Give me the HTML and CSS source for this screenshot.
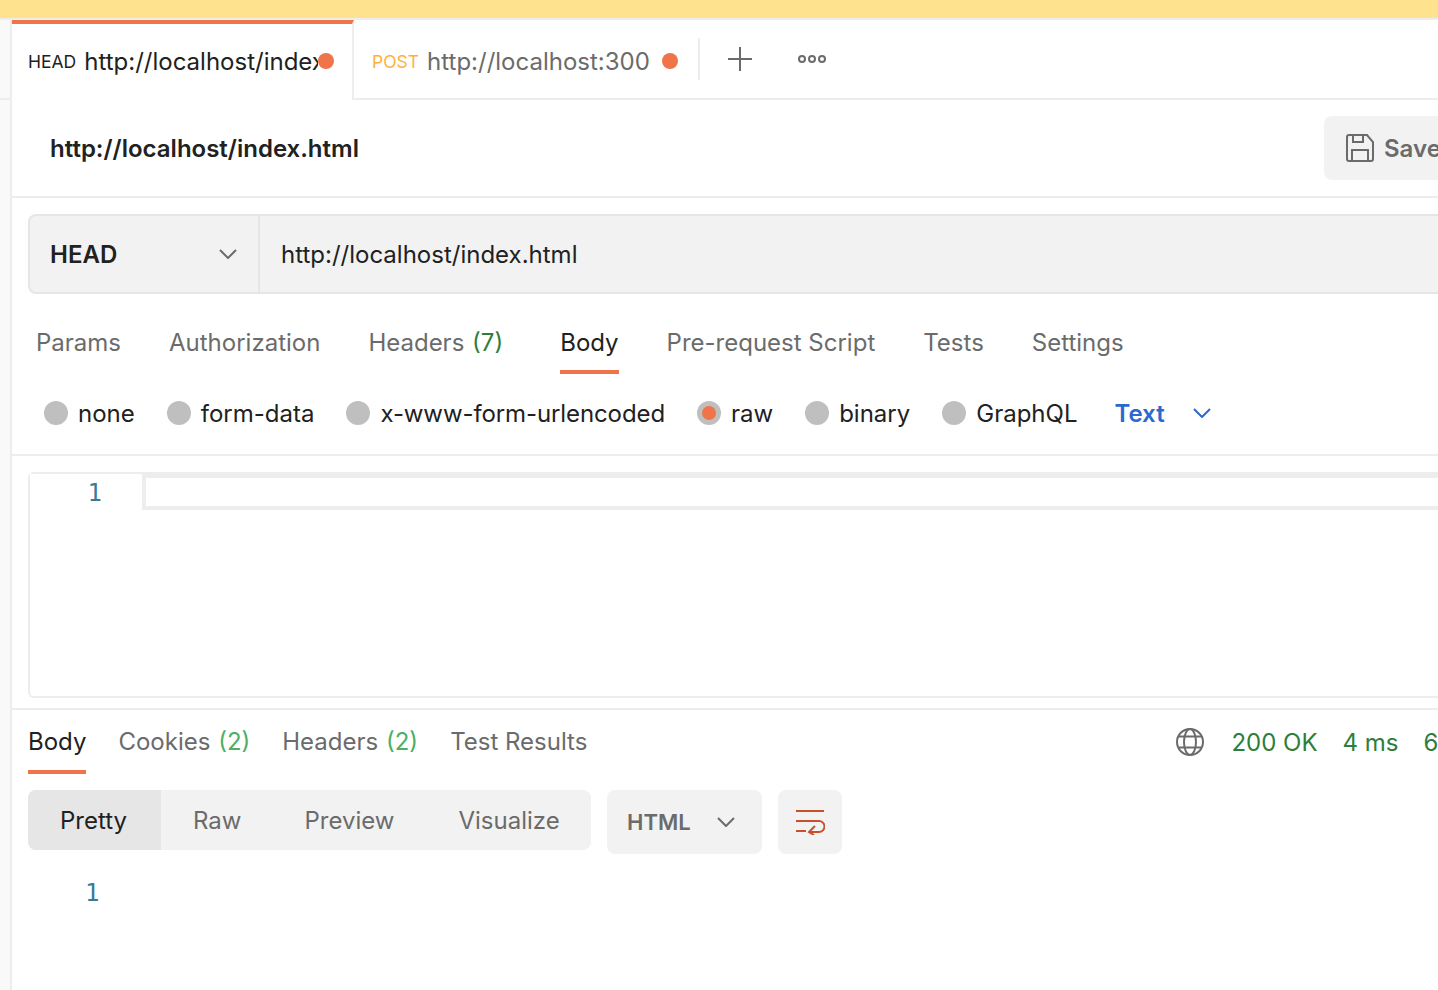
FILE: index.html
```html
<!DOCTYPE html>
<html lang="en">
<head>
  <meta charset="UTF-8">
  <title>Postman</title>
  <link rel="stylesheet" href="styles.css">
</head>
<body>
  <div class="banner"></div>
  <div class="app">
    <div class="sidebar"><div class="sidebar-head"></div></div>
    <div class="main">

      <div class="tabbar">
        <div class="tab tab-active">
          <span class="tab-method">HEAD</span>
          <span class="tab-url">http://localhost/index</span>
          <span class="dot"></span>
        </div>
        <div class="tab tab-second">
          <span class="tab-method post">POST</span>
          <span class="tab-url clipped">http://localhost:3000/</span>
          <span class="dot"></span>
        </div>
        <div class="tab-sep"></div>
        <svg class="icon-plus" width="26" height="26" viewBox="0 0 26 26"><path d="M13 1v24M1 13h24" stroke="#6b6b6b" stroke-width="2" fill="none"/></svg>
        <svg class="icon-more" width="30" height="10" viewBox="0 0 30 10"><g stroke="#6b6b6b" stroke-width="2" fill="none"><circle cx="5" cy="5" r="3"/><circle cx="15" cy="5" r="3"/><circle cx="25" cy="5" r="3"/></g></svg>
      </div>

      <div class="titlebar">
        <h1 class="title">http://localhost/index.html</h1>
        <div class="save-btn">
          <svg width="28" height="28" viewBox="0 0 28 28" fill="none" stroke="#6b6b6b" stroke-width="2"><path d="M1 3a2 2 0 0 1 2-2h18l6 7v17a2 2 0 0 1-2 2H3a2 2 0 0 1-2-2z"/><path d="M7 1v7h10V1M6 27V16h16v11"/></svg>
          <span>Save</span>
        </div>
      </div>

      <div class="urlbar">
        <div class="method">
          <span>HEAD</span>
          <svg width="18" height="10" viewBox="0 0 18 10"><path d="M1 1l8 8 8-8" stroke="#6b6b6b" stroke-width="2" fill="none"/></svg>
        </div>
        <div class="url">http://localhost/index.html</div>
      </div>

      <div class="req-tabs">
        <span class="rtab">Params</span>
        <span class="rtab">Authorization</span>
        <span class="rtab">Headers <em class="count-dark">(7)</em></span>
        <span class="rtab rtab-on req-body">Body</span>
        <span class="rtab">Pre-request Script</span>
        <span class="rtab">Tests</span>
        <span class="rtab">Settings</span>
      </div>

      <div class="body-types">
        <label class="radio"><i></i>none</label>
        <label class="radio"><i></i>form-data</label>
        <label class="radio radio-long"><i></i>x-www-form-urlencoded</label>
        <label class="radio radio-on"><i></i>raw</label>
        <label class="radio"><i></i>binary</label>
        <label class="radio"><i></i>GraphQL</label>
        <span class="type-text">Text</span>
        <svg width="18" height="10" viewBox="0 0 18 10"><path d="M1 1l8 8 8-8" stroke="#2a69ce" stroke-width="2" fill="none"/></svg>
      </div>

      <div class="editor-wrap">
        <div class="editor">
          <div class="gutter">1</div>
          <div class="code-line"></div>
        </div>
      </div>

      <div class="res-head">
        <span class="rtab rtab-on">Body</span>
        <span class="rtab">Cookies <em class="count">(2)</em></span>
        <span class="rtab">Headers <em class="count">(2)</em></span>
        <span class="rtab">Test Results</span>
        <div class="res-meta">
          <svg width="28" height="28" viewBox="0 0 28 28" fill="none" stroke="#6b6b6b" stroke-width="2"><circle cx="14" cy="14" r="13"/><ellipse cx="14" cy="14" rx="6" ry="13"/><path d="M3 8.5h22M3 19.5h22"/></svg>
          <span class="stat stat-first">200 OK</span>
          <span class="stat">4 ms</span>
          <span class="stat">66 B</span>
        </div>
      </div>

      <div class="res-tools">
        <div class="segments">
          <span class="seg seg-on">Pretty</span>
          <span class="seg seg-raw">Raw</span>
          <span class="seg seg-preview">Preview</span>
          <span class="seg seg-vis">Visualize</span>
        </div>
        <div class="lang">
          <span>HTML</span>
          <svg width="18" height="10" viewBox="0 0 18 10"><path d="M1 1l8 8 8-8" stroke="#6b6b6b" stroke-width="2" fill="none"/></svg>
        </div>
        <div class="wrap-btn">
          <svg width="30" height="26" viewBox="0 0 30 26" fill="none" stroke="#c8502b" stroke-width="2"><path d="M1 2h28M1 12h23a4.500 4.500 0 0 1 0 11h-9M1 22h10"/><path d="M20 17l-6 6 5 3"/></svg>
        </div>
      </div>

      <div class="res-code">1</div>
    </div>
  </div>
</body>
</html>
```

FILE: styles.css
```css
* {
  box-sizing: border-box;
}

html, body {
  margin: 0;
  height: 990px;
  overflow: hidden;
}

body {
  font-family: 'Inter', sans-serif;
  font-size: 24px;
  color: #212121;
  background-color: #fff;
}

.banner {
  height: 20px;
  background-color: #ffe28d;
  border-bottom: 2px solid #ededed;
}

.app {
  display: flex;
  height: 970px;
}

.sidebar {
  width: 12px;
  flex-shrink: 0;
  background-color: #f9f9f9;
  border-right: 2px solid #ededed;
}

.sidebar-head {
  height: 80px;
  border-bottom: 2px solid #ededed;
}

.main {
  width: 1600px;
  flex-shrink: 0;
}

/* tabs */
.tabbar {
  display: flex;
  align-items: center;
  height: 80px;
  border-bottom: 2px solid #ededed;
}

.tab {
  display: flex;
  align-items: center;
  font-size: 24px;
  color: #6b6b6b;
}

.tab-active {
  align-self: flex-start;
  width: 342px;
  height: 80px;
  padding: 0 18px 2px 16px;
  color: #212121;
  background-color: #fff;
  border-top: 4px solid #f0744a;
  border-right: 2px solid #ededed;
}

.tab-second {
  width: 344px;
  height: 78px;
  padding: 4px 20px 0 18px;
}

.tab-method {
  font-size: 17.5px;
  margin-right: 8px;
}

.post {
  color: #ffb13c;
}

.tab-url {
  white-space: nowrap;
  overflow: hidden;
}

.clipped {
  width: 224px;
}

.dot {
  width: 16px;
  height: 16px;
  margin-left: auto;
  border-radius: 50%;
  background-color: #f0744a;
  flex-shrink: 0;
}

.tab-sep {
  width: 2px;
  height: 42px;
  background-color: #ededed;
}

.icon-plus {
  margin-left: 27px;
}

.icon-more {
  margin-left: 44px;
}

/* title */
.titlebar {
  display: flex;
  align-items: center;
  height: 98px;
  padding-left: 38px;
  border-bottom: 2px solid #ededed;
}

.title {
  margin: 0;
  font-size: 24px;
  font-weight: 600;
  width: 1274px;
}

.save-btn {
  display: flex;
  align-items: center;
  width: 200px;
  height: 64px;
  padding-left: 22px;
  background-color: #f2f2f2;
  border-radius: 8px;
  color: #6b6b6b;
  font-weight: 600;
}

.save-btn span {
  margin-left: 10px;
}

/* url */
.urlbar {
  display: flex;
  height: 80px;
  margin: 16px 0 0 16px;
  background-color: #f2f2f2;
  border: 2px solid #e6e6e6;
  border-radius: 8px;
}

.method {
  display: flex;
  align-items: center;
  justify-content: space-between;
  width: 230px;
  padding: 0 21px 0 20px;
  border-right: 2px solid #e6e6e6;
  font-weight: 600;
}

.url {
  display: flex;
  align-items: center;
  padding-left: 21px;
}

.req-tabs {
  display: flex;
  gap: 48px;
  height: 80px;
  padding-left: 24px;
}

.req-body {
  margin-left: 9px;
}

.rtab {
  display: block;
  height: 100%;
  padding-top: 34px;
  color: #6b6b6b;
  white-space: nowrap;
}

.rtab em {
  font-style: normal;
  margin-left: 1px;
}

.count-dark {
  color: #2e7d3a;
}

.count {
  color: #4caf62;
}

.rtab-on {
  color: #212121;
  border-bottom: 4px solid #f0744a;
}

/* body type radios */
.body-types {
  display: flex;
  align-items: center;
  height: 82px;
  padding: 0 0 2px 32px;
  border-bottom: 2px solid #ededed;
}

.radio {
  display: flex;
  align-items: center;
  margin-right: 32px;
}

.radio-long {
  letter-spacing: -0.1px;
}

.radio i {
  display: flex;
  align-items: center;
  justify-content: center;
  width: 24px;
  height: 24px;
  margin-right: 10px;
  border-radius: 50%;
  background-color: #bfbfbf;
}

.radio-on i::after {
  content: "";
  width: 14px;
  height: 14px;
  border-radius: 50%;
  background-color: #f0744a;
}

.type-text {
  margin: 0 28px 0 5px;
  color: #2a69ce;
  font-weight: 600;
}

/* editor */
.editor-wrap {
  height: 254px;
  padding: 16px 0 10px 16px;
  border-bottom: 2px solid #ededed;
}

.editor {
  display: flex;
  align-items: flex-start;
  height: 226px;
  border: 2px solid #ededed;
  border-right: 0;
  border-radius: 6px 0 0 6px;
}

.gutter, .res-code {
  font-family: 'DejaVu Sans Mono', monospace;
  font-size: 24px;
  color: #3a7a96;
}

.gutter {
  width: 112px;
  height: 36px;
  padding: 5px 40px 0 0;
  text-align: right;
  background-color: #fff;
}

.code-line {
  flex: 1;
  height: 36px;
  border: 4px solid #ededed;
  border-right: 0;
}

/* response */
.res-head {
  display: flex;
  gap: 32px;
  height: 64px;
  padding-left: 16px;
}

.res-head .rtab {
  padding-top: 17px;
}

.res-meta {
  display: flex;
  align-items: center;
  margin-left: 557px;
  white-space: nowrap;
}

.stat {
  margin-left: 25px;
  color: #2e7d3a;
}

.stat-first {
  margin-left: 27px;
}

.res-tools {
  display: flex;
  align-items: flex-start;
  margin: 16px 0 0 16px;
}

.segments {
  display: flex;
  width: 563px;
  height: 60px;
  background-color: #f2f2f2;
  border-radius: 8px;
  overflow: hidden;
  color: #6b6b6b;
}

.seg {
  display: flex;
  align-items: center;
}

.seg-on {
  width: 133px;
  padding-left: 32px;
  background-color: #e6e6e6;
  color: #212121;
}

.seg-raw {
  margin-left: 32px;
}

.seg-preview {
  margin-left: 63px;
}

.seg-vis {
  margin-left: 64px;
}

.lang {
  display: flex;
  align-items: center;
  justify-content: space-between;
  width: 155px;
  height: 64px;
  margin-left: 16px;
  padding: 0 27px 0 20px;
  background-color: #f2f2f2;
  border-radius: 8px;
  color: #6b6b6b;
  font-size: 22px;
  font-weight: 600;
}

.wrap-btn {
  display: flex;
  align-items: center;
  justify-content: center;
  width: 64px;
  height: 64px;
  margin-left: 16px;
  background-color: #f2f2f2;
  border-radius: 8px;
}

.res-code {
  padding: 25px 0 0 73px;
}
```
